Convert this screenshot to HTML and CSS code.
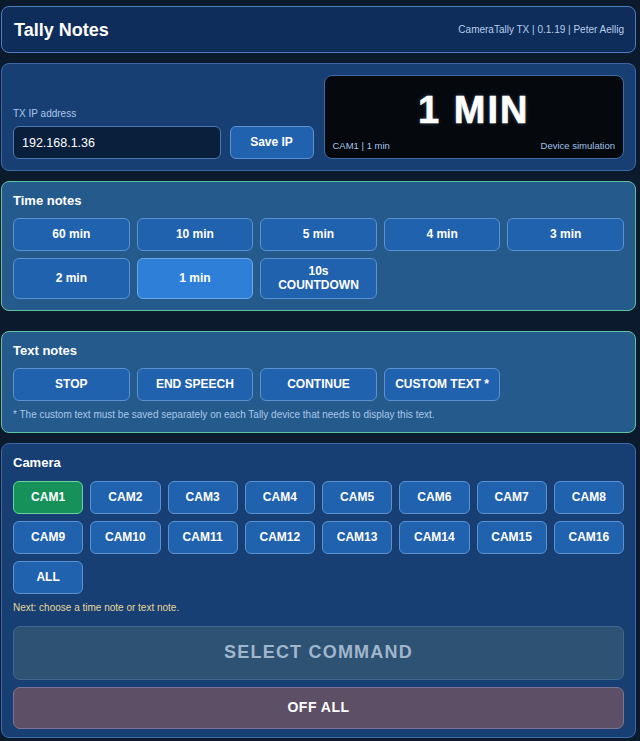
FILE: index.html
```html
<!DOCTYPE html>
<html lang="en">
<head>
  <meta charset="UTF-8">
  <meta name="viewport" content="width=device-width, initial-scale=1.0">
  <title>Tally Notes</title>
  <link rel="stylesheet" href="styles.css">
</head>
<body>
  <div class="app">
    <header class="card top-bar">
      <h1>Tally Notes</h1>
      <span class="meta">CameraTally TX | 0.1.19 | Peter Aellig</span>
    </header>

    <section class="card connect">
      <div class="ip-col">
        <label for="ip">TX IP address</label>
        <div class="ip-row">
          <input id="ip" type="text" value="192.168.1.36">
          <button class="btn">Save IP</button>
        </div>
      </div>
      <div class="preview">
        <div class="preview-text">1 MIN</div>
        <div class="preview-foot">
          <span>CAM1 | 1 min</span>
          <span>Device simulation</span>
        </div>
      </div>
    </section>

    <section class="card notes time">
      <h2 class="section-title">Time notes</h2>
      <div class="note-grid">
        <button class="btn">60 min</button>
        <button class="btn">10 min</button>
        <button class="btn">5 min</button>
        <button class="btn">4 min</button>
        <button class="btn">3 min</button>
        <button class="btn">2 min</button>
        <button class="btn active">1 min</button>
        <button class="btn">10s<br>COUNTDOWN</button>
      </div>
    </section>

    <section class="card notes">
      <h2 class="section-title">Text notes</h2>
      <div class="note-grid">
        <button class="btn">STOP</button>
        <button class="btn">END SPEECH</button>
        <button class="btn">CONTINUE</button>
        <button class="btn">CUSTOM TEXT *</button>
      </div>
      <p class="hint">* The custom text must be saved separately on each Tally device that needs to display this text.</p>
    </section>

    <section class="card camera">
      <h2 class="section-title">Camera</h2>
      <div class="cam-grid">
        <button class="btn selected">CAM1</button>
        <button class="btn">CAM2</button>
        <button class="btn">CAM3</button>
        <button class="btn">CAM4</button>
        <button class="btn">CAM5</button>
        <button class="btn">CAM6</button>
        <button class="btn">CAM7</button>
        <button class="btn">CAM8</button>
        <button class="btn">CAM9</button>
        <button class="btn">CAM10</button>
        <button class="btn">CAM11</button>
        <button class="btn">CAM12</button>
        <button class="btn">CAM13</button>
        <button class="btn">CAM14</button>
        <button class="btn">CAM15</button>
        <button class="btn">CAM16</button>
        <button class="btn">ALL</button>
      </div>
      <p class="next-hint">Next: choose a time note or text note.</p>
      <button class="btn send" disabled>SELECT COMMAND</button>
      <button class="btn off-all">OFF ALL</button>
    </section>
  </div>
</body>
</html>
```

FILE: styles.css
```css
:root {
  --bg-page: #0b1a2d;
  --bg-header: #0f2d5a;
  --bg-card: #173f73;
  --bg-notes: #255a8d;
  --border-card: #3b6ba6;
  --border-notes: #5fc3a2;
  --btn-bg: #2162ae;
  --btn-border: #5a92d2;
  --btn-active: #2e7fd8;
  --btn-selected: #16915a;
  --text-soft: #a9c8ec;
}
* { box-sizing: border-box; }
body {
  margin: 0;
  background: var(--bg-page);
  color: #fff;
  font-family: "Liberation Sans", Arial, sans-serif;
}
.app {
  display: flex; flex-direction: column; gap: 10px;
  padding: 6px 4px 0 1px;
}
.card {
  background: var(--bg-card);
  border: 1px solid var(--border-card);
  border-radius: 8px;
  padding: 11px;
}

/* Header bar */
.top-bar {
  height: 47px;
  padding: 0 11px 0 12px;
  display: flex; align-items: center; justify-content: space-between;
  background: var(--bg-header);
  border-color: #4b7dc0;
}
.top-bar h1 { margin: 0; font-size: 18px; line-height: 22px; }
.meta { font-size: 10px; color: #b6cdee; }

/* IP + device preview */
.connect {
  display: grid; grid-template-columns: 1fr 1fr; gap: 10px;
}
.ip-col { display: flex; flex-direction: column; justify-content: flex-end; }
.ip-col label { font-size: 10px; line-height: 12px; color: var(--text-soft); margin-bottom: 6px; }
.ip-row { display: flex; gap: 9px; }
.ip-row input {
  flex: 1; min-width: 0; height: 33px;
  background: #0a1f3b;
  border: 1px solid #4a79b3;
  border-radius: 6px;
  color: #fff;
  font: 12.5px "Liberation Sans", Arial, sans-serif;
  padding: 0 8px;
}
.ip-row .btn { width: 84px; height: 33px; }

.preview {
  height: 84px;
  display: flex; flex-direction: column;
  background: #05080d;
  border: 1px solid #3f6ca3;
  border-radius: 8px;
  padding: 4px 8px 6px;
}
.preview-text {
  flex: 1;
  display: flex; align-items: center; justify-content: center;
  font-size: 38px; font-weight: bold; letter-spacing: 2px;
  -webkit-text-stroke: 0.6px #fff;
  text-shadow: 0 0 4px rgba(160, 200, 255, 0.35);
}
.preview-foot {
  display: flex; justify-content: space-between;
  font-size: 9.5px; line-height: 12px; color: #a3c3e8;
}

/* Buttons */
.btn {
  min-height: 33px;
  padding: 6px 4px;
  background: var(--btn-bg);
  border: 1px solid var(--btn-border);
  border-radius: 6px;
  color: #fff;
  font: bold 12px/13.5px "Liberation Sans", Arial, sans-serif;
  cursor: pointer;
}
.btn.active { background: var(--btn-active); border-color: #6aa8ea; }
.btn.selected { background: var(--btn-selected); border-color: #6cd49a; }

/* Note sections */
.notes { background: var(--bg-notes); border-color: var(--border-notes); }
.time { margin-bottom: 10px; }
.section-title { margin: 0 0 9px; font-size: 13px; line-height: 16px; }
.note-grid { display: grid; grid-template-columns: repeat(5, 1fr); gap: 7px; }
.hint { margin: 8px 0 0; font-size: 10px; line-height: 12px; color: #a8c8ea; }

/* Camera selection */
.camera { padding-bottom: 8px; }
.camera .section-title { margin-bottom: 10px; }
.cam-grid { display: grid; grid-template-columns: repeat(8, 1fr); gap: 7px; }
.next-hint { margin: 8px 0 12px; font-size: 10px; line-height: 12px; color: #e6d79c; }
.send {
  display: block; width: 100%; height: 54px;
  background: #2e5274; border-color: #41698f; border-radius: 7px;
  color: #a0b6cd;
  font-size: 18px; letter-spacing: 1.2px;
  cursor: default;
}
.off-all {
  display: block; width: 100%; height: 42px; margin-top: 7px;
  background: #5d5066; border-color: #7e7494; border-radius: 7px;
  font-size: 14px; letter-spacing: 0.5px;
}
```
